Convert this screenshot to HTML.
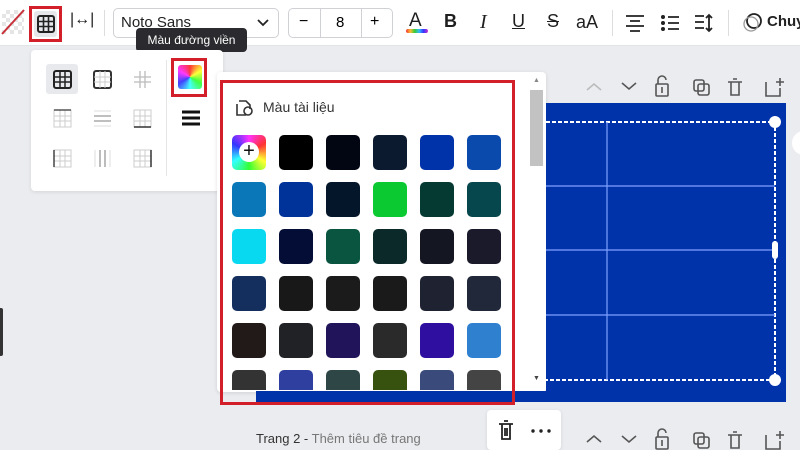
<!DOCTYPE html><html><head><meta charset="utf-8"><style>
*{margin:0;padding:0;box-sizing:border-box}
body{width:800px;height:450px;overflow:hidden;background:#ebecf0;font-family:"Liberation Sans","DejaVu Sans",sans-serif;position:relative}
.a{position:absolute}
.tb{left:0;top:0;width:800px;height:46px;background:#fff;border-bottom:1px solid #e2e3e6}
.sw{position:absolute;width:34px;height:35px;border-radius:5px}
.ic{position:absolute;font-size:18px;color:#1f1f1f}
</style></head><body>
<div class="a tb"></div>
<!-- toolbar -->
<div class="a" style="left:2px;top:10px;width:22px;height:24px;background:repeating-conic-gradient(#e5e5e5 0 25%,#fff 0 50%) 0 0/8px 8px"></div>
<svg class="a" style="left:0;top:8px" width="26" height="28"><line x1="2" y1="26" x2="24" y2="2" stroke="#c8313a" stroke-width="2"/></svg>
<div class="a" style="left:29px;top:6px;width:33px;height:36px;border:3px solid #d21f2a"></div>
<div class="a" style="left:34px;top:11px;width:23px;height:26px;background:#e6e7ea;border-radius:3px"></div>
<svg class="a" style="left:37px;top:15px" width="18" height="18"><rect x="1" y="1" width="16" height="16" rx="2" fill="none" stroke="#222" stroke-width="2"/><path d="M6.5 1V17M11.5 1V17M1 6.5H17M1 11.5H17" stroke="#222" stroke-width="1.6"/></svg>
<div class="ic" style="left:70px;top:11px;font-size:16px">|↔|</div>
<div class="a" style="left:104px;top:10px;width:1px;height:26px;background:#ddd"></div>
<div class="a" style="left:113px;top:8px;width:166px;height:30px;border:1px solid #cfd1d5;border-radius:5px"></div>
<div class="a" style="left:121px;top:14px;font-size:15px;color:#222">Noto Sans</div>
<svg class="a" style="left:257px;top:18px" width="12" height="10"><path d="M1 2l5 5 5-5" fill="none" stroke="#222" stroke-width="1.8"/></svg>
<div class="a" style="left:288px;top:8px;width:105px;height:30px;border:1px solid #cfd1d5;border-radius:5px"></div>
<div class="a" style="left:320px;top:8px;width:42px;height:30px;border-left:1px solid #cfd1d5;border-right:1px solid #cfd1d5"></div>
<div class="a" style="left:299px;top:13px;font-size:16px">−</div>
<div class="a" style="left:336px;top:14px;font-size:15px">8</div>
<div class="a" style="left:370px;top:13px;font-size:16px">+</div>
<div class="ic" style="left:409px;top:10px;font-size:19px">A</div>
<div class="a" style="left:406px;top:29px;width:22px;height:4px;border-radius:2px;background:linear-gradient(90deg,#e33,#fb3,#3c3,#3bf,#33f,#c3c)"></div>
<div class="ic" style="left:444px;top:11px;font-weight:bold">B</div>
<div class="ic" style="left:480px;top:11px;font-style:italic;font-family:'Liberation Serif',serif;font-size:20px">I</div>
<div class="ic" style="left:512px;top:11px;text-decoration:underline">U</div>
<div class="ic" style="left:547px;top:11px;text-decoration:line-through">S</div>
<div class="ic" style="left:576px;top:12px">aA</div>
<div class="a" style="left:612px;top:10px;width:1px;height:26px;background:#ddd"></div>
<svg class="a" style="left:625px;top:14px" width="20" height="18"><path d="M1 2H19M5 7H15M1 12H19M5 17H15" stroke="#222" stroke-width="1.8"/></svg>
<svg class="a" style="left:660px;top:14px" width="20" height="18"><circle cx="3" cy="3" r="2" fill="#222"/><circle cx="3" cy="9" r="2" fill="#222"/><circle cx="3" cy="15" r="2" fill="#222"/><path d="M8 3H19M8 9H19M8 15H19" stroke="#222" stroke-width="1.8"/></svg>
<svg class="a" style="left:694px;top:13px" width="20" height="20"><path d="M1 3H10M1 9H10M1 15H10M15 2V18M12 5l3-3 3 3M12 15l3 3 3-3" fill="none" stroke="#222" stroke-width="1.8"/></svg>
<div class="a" style="left:728px;top:10px;width:1px;height:26px;background:#ddd"></div>
<svg class="a" style="left:740px;top:12px" width="24" height="22"><circle cx="14" cy="9" r="7" fill="none" stroke="#222" stroke-width="1.8"/><circle cx="11" cy="12" r="7" fill="none" stroke="#999" stroke-width="1.3"/></svg>
<div class="a" style="left:767px;top:13px;font-size:15px;font-weight:bold;color:#222">Chuy</div>
<!-- tooltip -->
<div class="a" style="left:136px;top:28px;width:111px;height:24px;background:#2b2b2f;border-radius:4px;color:#fff;font-size:12px;line-height:24px;text-align:center">Màu đường viền</div>
<!-- left panel -->
<div class="a" style="left:31px;top:50px;width:192px;height:141px;background:#fff;border-radius:4px;box-shadow:0 1px 4px rgba(0,0,0,.1)"></div>
<div class="a" style="left:166px;top:60px;width:1px;height:116px;background:#e5e5e5"></div>
<div class="a" style="left:46px;top:64px;width:32px;height:30px;background:#e8e9ec;border-radius:3px"></div>
<svg class="a" style="left:0;top:0" width="230" height="200">
<g fill="none">
<rect x="54" y="71" width="17" height="17" rx="2" stroke="#222" stroke-width="2"/><path d="M60 71v17M65 71v17M54 77h17M54 82h17" stroke="#222" stroke-width="1.5"/>
<rect x="94" y="71" width="17" height="17" rx="2" stroke="#333" stroke-width="2"/><path d="M100 71v17M105 71v17M94 77h17M94 82h17" stroke="#ccc" stroke-width="1"/>
<path d="M140 71v17M145 71v17M134 77h17M134 82h17" stroke="#bbb" stroke-width="1.3"/>
<rect x="54" y="110" width="17" height="17" stroke="#ccc"/><path d="M60 110v17M65 110v17M54 116h17M54 121h17" stroke="#ccc"/><path d="M54 110h17" stroke="#555" stroke-width="1.5"/>
<path d="M94 116h17M94 121h17" stroke="#999" stroke-width="1.3"/><path d="M94 111h17M94 126h17" stroke="#ddd"/>
<rect x="134" y="110" width="17" height="17" stroke="#ccc"/><path d="M140 110v17M145 110v17M134 116h17M134 121h17" stroke="#ccc"/><path d="M134 127h17" stroke="#333" stroke-width="1.5"/>
<rect x="54" y="150" width="17" height="17" stroke="#ccc"/><path d="M60 150v17M65 150v17M54 156h17M54 161h17" stroke="#ccc"/><path d="M54 150v17" stroke="#444" stroke-width="1.5"/>
<path d="M100 150v17M105 150v17" stroke="#999" stroke-width="1.3"/><path d="M95 150v17M110 150v17" stroke="#ddd"/>
<rect x="134" y="150" width="17" height="17" stroke="#ccc"/><path d="M140 150v17M145 150v17M134 156h17M134 161h17" stroke="#ccc"/><path d="M151 150v17" stroke="#333" stroke-width="1.5"/>
</g>
<path d="M182 112h18M182 118h18M182 124h18" stroke="#111" stroke-width="3"/>
</svg>
<div class="a" style="left:171px;top:58px;width:36px;height:39px;border:3px solid #d21f2a"></div>
<div class="a" style="left:178px;top:65px;width:24px;height:24px;border-radius:3px;background:linear-gradient(0deg,rgba(255,255,255,.1),rgba(255,255,255,.0)),conic-gradient(from 0deg,#f33,#ff3,#3f3,#3ff,#33f,#f3f,#f33)"></div>
<!-- color panel -->
<div class="a" style="left:217px;top:72px;width:329px;height:320px;background:#fff;border-radius:4px;box-shadow:0 1px 4px rgba(0,0,0,.12)"></div>
<div class="a" style="left:530px;top:90px;width:13px;height:76px;background:#c2c2c2"></div>
<div class="a" style="left:533px;top:77px;font-size:7px;color:#888">▲</div>
<div class="a" style="left:533px;top:375px;font-size:7px;color:#444">▼</div>
<svg class="a" style="left:233px;top:96px" width="22" height="22"><path d="M4 8V19h9M6 5h7l4 4v4" fill="none" stroke="#333" stroke-width="1.6"/><circle cx="15" cy="15" r="4" fill="none" stroke="#333" stroke-width="1.6"/></svg>
<div class="a" style="left:263px;top:99px;font-size:14px;color:#333">Màu tài liệu</div>
<div class="sw" style="left:232px;top:135px;background:conic-gradient(#f3f,#f33,#ff3,#3f3,#3ff,#33f,#f3f)"></div>
<div class="a" style="left:239px;top:142px;width:20px;height:20px;border-radius:50%;background:#fff;font-size:20px;line-height:19px;text-align:center;color:#111">+</div>
<div id="g"></div>
<script>
var c=[[null,'#000000','#020612','#0b1a2e','#0033aa','#0a4aad'],['#0a78b8','#003399','#03162a','#0bc930','#053a33','#06474d'],['#08d8f0','#040d36','#0a5540','#0b2928','#141622','#1a1a2a'],['#142f5e','#181818','#1b1b1b','#1a1a1a','#1f2230','#202839'],['#221a18','#202226','#21145a','#2a2a2a','#2e0fa0','#2f80cf'],['#333333','#2f3f9f','#2f4646','#37520f','#3a4a7a','#444444']];
var h='';var xs=[232,279,326,373,420,467];
c.forEach(function(r,i){r.forEach(function(v,j){if(v){var y=135+i*47;var ht=i==5?390-y:35;h+='<div class="sw" style="left:'+xs[j]+'px;top:'+y+'px;height:'+ht+'px;background:'+v+';'+(i==5?'border-radius:5px 5px 0 0':'')+'"></div>';}})});
document.getElementById('g').innerHTML=h;
</script>
<!-- canvas -->
<div class="a" style="left:546px;top:103px;width:240px;height:299px;background:#0033aa"></div>
<div class="a" style="left:256px;top:391px;width:290px;height:11px;background:#0033aa"></div>
<svg class="a" style="left:546px;top:103px" width="254" height="300">
<path d="M0 19H229V277H0" fill="none" stroke="#fff" stroke-width="2" stroke-dasharray="4 2"/>
<path d="M61 19V277M0 83H229M0 147H229M0 212H229" stroke="#7fa0ff" stroke-width="1.2"/>
<circle cx="229" cy="19" r="6" fill="#fff"/><circle cx="229" cy="277" r="6" fill="#fff"/>
<rect x="226" y="138" width="6" height="18" rx="3" fill="#fff"/>
<circle cx="258" cy="40" r="12" fill="#fff"/>
</svg>
<div class="a" style="left:220px;top:80px;width:295px;height:325px;border:3px solid #d21f2a"></div>
<!-- top page actions -->
<svg class="a" style="left:580px;top:70px" width="210" height="30" fill="none" stroke="#555" stroke-width="1.6">
<path d="M7 20l7-6 7 6" stroke="#bbb"/><path d="M42 13l7 6 7-6"/>
<rect x="76" y="14" width="12" height="12" rx="1"/><path d="M78 14v-4a4 4 0 0 1 8 0"/><path d="M82 23v-6"/>
<rect x="114" y="10" width="10" height="11" rx="2"/><rect x="118" y="14" width="11" height="11" rx="2"/>
<path d="M148 12h14M151 12v13h8V12M153 9h4"/>
<path d="M186 12v14h14v-8M196 12h8M200 8v8"/>
</svg>
<!-- bottom -->
<div class="a" style="left:256px;top:431px;font-size:13px;color:#333">Trang 2 - <span style="color:#777">Thêm tiêu đề trang</span></div>
<div class="a" style="left:487px;top:410px;width:74px;height:40px;background:#fff;border-radius:4px;box-shadow:0 1px 4px rgba(0,0,0,.1)"></div>
<svg class="a" style="left:496px;top:419px" width="60" height="24" fill="none" stroke="#222" stroke-width="1.8"><path d="M3 5h14M6 5v15h8V5M8 2h4M9 9v8M11 9v8"/><circle cx="37" cy="12" r="1.7" fill="#222" stroke="none"/><circle cx="45" cy="12" r="1.7" fill="#222" stroke="none"/><circle cx="53" cy="12" r="1.7" fill="#222" stroke="none"/></svg>
<svg class="a" style="left:580px;top:425px" width="210" height="25" fill="none" stroke="#555" stroke-width="1.6">
<path d="M7 17l7-6 7 6"/><path d="M42 11l7 6 7-6"/>
<rect x="76" y="12" width="12" height="12" rx="1"/><path d="M78 12v-4a4 4 0 0 1 8 0"/><path d="M82 21v-6"/>
<rect x="114" y="8" width="10" height="11" rx="2"/><rect x="118" y="12" width="11" height="11" rx="2"/>
<path d="M148 10h14M151 10v13h8V10M153 7h4"/>
<path d="M186 10v14h14v-8M196 10h8M200 6v8"/>
</svg>
<div class="a" style="left:0;top:308px;width:3px;height:48px;background:#333;border-radius:0 2px 2px 0"></div>
</body></html>
